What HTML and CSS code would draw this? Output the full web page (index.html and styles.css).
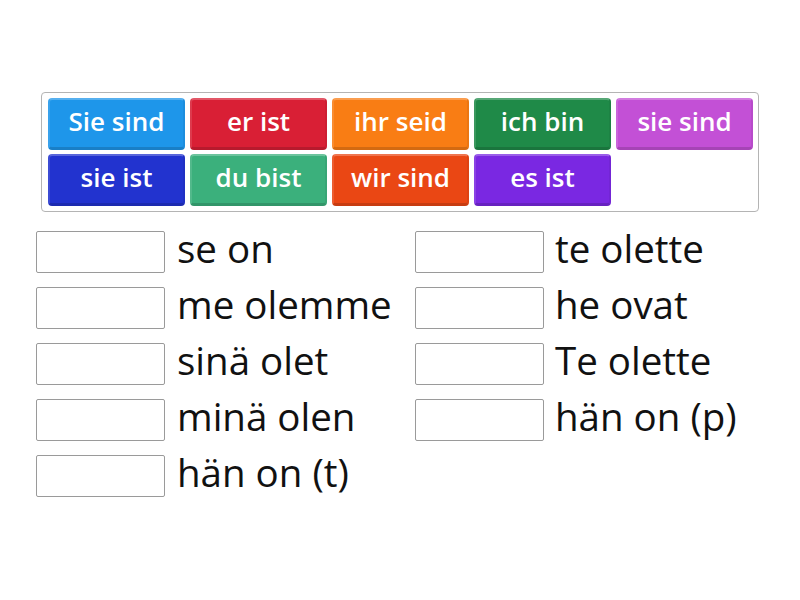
FILE: index.html
```html
<!DOCTYPE html>
<html>
<head>
<meta charset="utf-8">
<link rel="stylesheet" href="styles.css">
</head>
<body>
<div class="page">
  <div class="bank">
    <div class="tile c1">Sie sind</div>
    <div class="tile c2">er ist</div>
    <div class="tile c3">ihr seid</div>
    <div class="tile c4">ich bin</div>
    <div class="tile c5">sie sind</div>
    <div class="tile c6">sie ist</div>
    <div class="tile c7">du bist</div>
    <div class="tile c8">wir sind</div>
    <div class="tile c9">es ist</div>
  </div>
  <div class="grid">
    <div class="col">
      <div class="row"><div class="slot"></div><span class="label">se on</span></div>
      <div class="row"><div class="slot"></div><span class="label">me olemme</span></div>
      <div class="row"><div class="slot"></div><span class="label">sinä olet</span></div>
      <div class="row"><div class="slot"></div><span class="label">minä olen</span></div>
      <div class="row"><div class="slot"></div><span class="label">hän on (t)</span></div>
    </div>
    <div class="col">
      <div class="row"><div class="slot"></div><span class="label">te olette</span></div>
      <div class="row"><div class="slot"></div><span class="label">he ovat</span></div>
      <div class="row"><div class="slot"></div><span class="label">Te olette</span></div>
      <div class="row"><div class="slot"></div><span class="label">hän on (p)</span></div>
    </div>
  </div>
</div>
</body>
</html>
```
FILE: styles.css
```css
html, body {
  margin: 0;
  padding: 0;
  background: #fff;
  font-family: "Open Sans", sans-serif;
}
.page {
  width: 800px;
  height: 600px;
  padding-top: 92px;
  box-sizing: border-box;
}
.bank {
  margin-left: 41px;
  width: 718px;
  height: 120px;
  box-sizing: border-box;
  border: 1px solid #b4b4b4;
  border-radius: 4px;
  padding: 5px 6px;
  display: grid;
  grid-template-columns: repeat(5, 137px);
  grid-auto-rows: 52px;
  column-gap: 5px;
  row-gap: 4px;
}
.tile {
  box-sizing: border-box;
  border-radius: 4px;
  color: #fff;
  font-weight: 600;
  font-size: 26px;
  display: flex;
  align-items: center;
  justify-content: center;
  border-top: 2px solid rgba(255,255,255,0.25);
  border-bottom: 3px solid rgba(0,0,0,0.15);
  border-left: 2px solid rgba(255,255,255,0.12);
  border-right: 2px solid rgba(0,0,0,0.06);
  padding-bottom: 5px;
  white-space: nowrap;
}
.c1 { background: #1e96ea; }
.c2 { background: #d91f35; }
.c3 { background: #f97d14; }
.c4 { background: #1f8a48; }
.c5 { background: #c350d6; }
.c6 { background: #2233cf; }
.c7 { background: #3bb07c; }
.c8 { background: #ea4714; }
.c9 { background: #7a28e2; }
.grid {
  display: flex;
  margin-top: 19px;
}
.col {
  display: flex;
  flex-direction: column;
  gap: 14px;
}
.col:first-child {
  margin-left: 36px;
  width: 379px;
}
.row {
  display: flex;
  align-items: center;
  height: 42px;
}
.slot {
  width: 129px;
  height: 42px;
  box-sizing: border-box;
  border: 1px solid #9a9a9a;
  border-radius: 2px;
  flex: none;
}
.label {
  margin-left: 12px;
  font-size: 38.5px;
  color: #111;
  line-height: 42px;
  padding-bottom: 8px;
  white-space: nowrap;
}
.col + .col .label {
  margin-left: 11px;
}
```
